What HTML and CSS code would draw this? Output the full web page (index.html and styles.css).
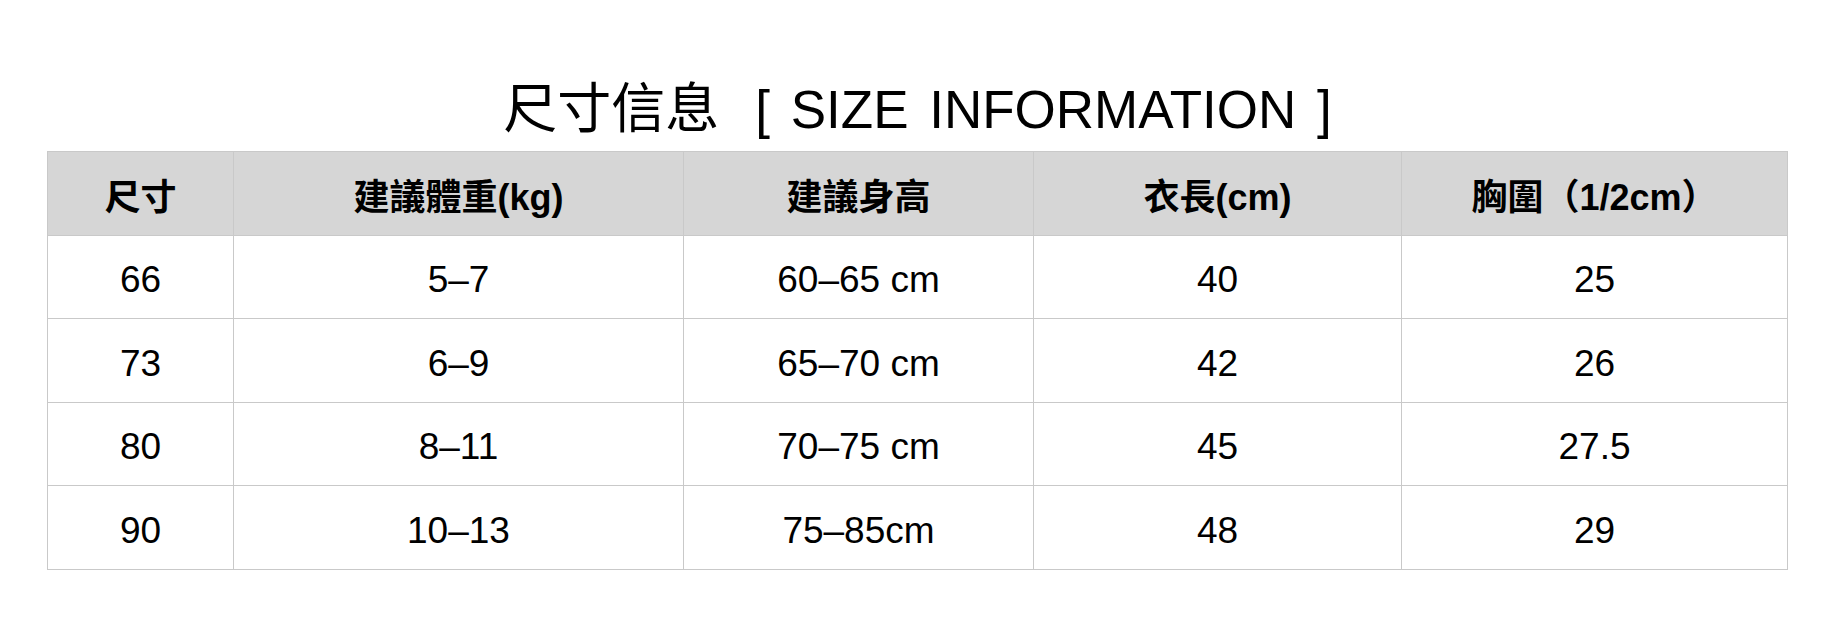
FILE: index.html
```html
<!DOCTYPE html>
<html lang="zh-Hant">
<head>
<meta charset="utf-8">
<title>尺寸信息</title>
<link rel="stylesheet" href="styles.css">
</head>
<body>
<div class="wrap">
  <h1 class="title"><span class="cn">尺寸信息</span><span class="en">[ SIZE INFORMATION ]</span></h1>
  <div class="grid">
    <div class="cell head">尺寸</div>
    <div class="cell head">建議體重(kg)</div>
    <div class="cell head">建議身高</div>
    <div class="cell head">衣長(cm)</div>
    <div class="cell head">胸圍（1/2cm）</div>

    <div class="cell">66</div>
    <div class="cell">5–7</div>
    <div class="cell">60–65 cm</div>
    <div class="cell">40</div>
    <div class="cell">25</div>

    <div class="cell">73</div>
    <div class="cell">6–9</div>
    <div class="cell">65–70 cm</div>
    <div class="cell">42</div>
    <div class="cell">26</div>

    <div class="cell">80</div>
    <div class="cell">8–11</div>
    <div class="cell">70–75 cm</div>
    <div class="cell">45</div>
    <div class="cell">27.5</div>

    <div class="cell">90</div>
    <div class="cell">10–13</div>
    <div class="cell">75–85cm</div>
    <div class="cell">48</div>
    <div class="cell">29</div>
  </div>
</div>
</body>
</html>
```

FILE: styles.css
```css
html, body {
  margin: 0;
  padding: 0;
  background: #ffffff;
}

body {
  font-family: "Liberation Sans", "Noto Sans CJK TC", sans-serif;
  color: #000;
}

.wrap {
  width: 1741px;
  padding-left: 47px;
}

.title {
  margin: 0 0 11px 0;
  padding-top: 80px;
  font-size: 52px;
  line-height: 60px;
  font-weight: normal;
  text-align: center;
  white-space: nowrap;
}

.title .cn {
  font-size: 54px;
  line-height: 40px;
  margin-right: 36px;
}

.title .en {
  font-size: 53px;
  line-height: 40px;
  word-spacing: 6px;
}

.grid {
  display: grid;
  grid-template-columns: 186px 450px 350px 368px 386px;
  grid-template-rows: 84px 83px 84px 83px 84px;
  border-left: 1px solid #c9c9c9;
  border-top: 1px solid #c9c9c9;
  box-sizing: border-box;
}

.cell {
  box-sizing: border-box;
  border-right: 1px solid #c9c9c9;
  border-bottom: 1px solid #c9c9c9;
  display: flex;
  align-items: center;
  justify-content: center;
  font-size: 37px;
  padding-top: 6px;
  white-space: nowrap;
}

.cell.head {
  background: #d6d6d6;
  font-size: 36px;
  font-weight: bold;
  padding-top: 0;
}
```
